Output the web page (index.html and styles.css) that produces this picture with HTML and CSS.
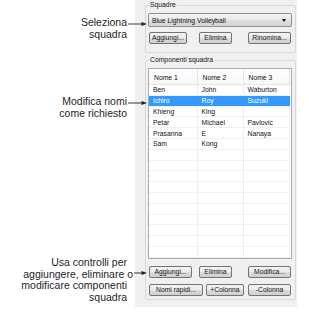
FILE: index.html
```html
<!DOCTYPE html>
<html lang="it">
<head>
    <title>Squadre</title>
    <link rel="stylesheet" href="styles.css">
</head>
<body>

<div class="page">
    <div class="notes">
        <div class="note note-select">
            <p class="note-text">Seleziona<br>squadra</p>
            <svg class="arrow arrow-long" width="19" height="12" viewBox="0 0 19 12">
                <line x1="0" y1="6" x2="15" y2="6" stroke="#222" stroke-width="0.9"/>
                <polygon points="19,6 13.5,4 13.5,8" fill="#222"/>
            </svg>
        </div>
        <div class="note note-edit">
            <p class="note-text">Modifica nomi<br>come richiesto</p>
            <svg class="arrow arrow-long" width="19" height="12" viewBox="0 0 19 12">
                <line x1="0" y1="6" x2="15" y2="6" stroke="#222" stroke-width="0.9"/>
                <polygon points="19,6 13.5,4 13.5,8" fill="#222"/>
            </svg>
        </div>
        <div class="note note-controls">
            <p class="note-text">
                <span class="note-line">Usa controlli per</span>
                <span class="note-line note-line-wide">aggiungere, eliminare o</span>
                <span class="note-line">modificare componenti</span>
                <span class="note-line">squadra</span>
            </p>
            <svg class="arrow arrow-short" width="13" height="12" viewBox="0 0 13 12">
                <line x1="0" y1="6" x2="9" y2="6" stroke="#222" stroke-width="0.9"/>
                <polygon points="13,6 7.5,4 7.5,8" fill="#222"/>
            </svg>
        </div>
    </div>

    <div class="panel">
        <fieldset class="group group-teams">
            <legend>Squadre</legend>
            <div class="combo">
                <span>Blue Lightning Volleyball</span>
                <span class="combo-arrow"></span>
            </div>
            <div class="btn-row btn-row-first">
                <button class="btn w38">Aggiungi...</button>
                <button class="btn w33 ml12">Elimina</button>
                <button class="btn w43 ml16">Rinomina...</button>
            </div>
        </fieldset>

        <fieldset class="group group-members">
            <legend>Componenti squadra</legend>
            <div class="listbox">
                <table class="grid">
                    <thead>
                        <tr><th>Nome 1</th><th>Nome 2</th><th>Nome 3</th><th class="filler"></th></tr>
                    </thead>
                    <tbody>
                        <tr><td>Ben</td><td>John</td><td>Waburton</td><td class="filler"></td></tr>
                        <tr class="selected"><td>Ichiro</td><td>Roy</td><td>Suzuki</td><td class="filler"></td></tr>
                        <tr><td>Khieng</td><td>King</td><td></td><td class="filler"></td></tr>
                        <tr><td>Petar</td><td>Michael</td><td>Pavlovic</td><td class="filler"></td></tr>
                        <tr><td>Prasanna</td><td>E</td><td>Nanaya</td><td class="filler"></td></tr>
                        <tr><td>Sam</td><td>Kong</td><td></td><td class="filler"></td></tr>
                        <tr><td></td><td></td><td></td><td class="filler"></td></tr>
                        <tr><td></td><td></td><td></td><td class="filler"></td></tr>
                        <tr><td></td><td></td><td></td><td class="filler"></td></tr>
                        <tr><td></td><td></td><td></td><td class="filler"></td></tr>
                        <tr><td></td><td></td><td></td><td class="filler"></td></tr>
                        <tr><td></td><td></td><td></td><td class="filler"></td></tr>
                        <tr><td></td><td></td><td></td><td class="filler"></td></tr>
                        <tr><td></td><td></td><td></td><td class="filler"></td></tr>
                        <tr><td></td><td></td><td></td><td class="filler"></td></tr>
                        <tr><td></td><td></td><td></td><td class="filler"></td></tr>
                    </tbody>
                </table>
            </div>
            <div class="btn-row btn-row-list">
                <button class="btn w43">Aggiungi...</button>
                <button class="btn w33 ml7">Elimina</button>
                <button class="btn w43 ml16">Modifica...</button>
            </div>
            <div class="btn-row btn-row-extra">
                <button class="btn w54">Nomi rapidi...</button>
                <button class="btn w38 ml3">+Colonna</button>
                <button class="btn w43 ml4">-Colonna</button>
            </div>
        </fieldset>
    </div>
</div>

</body>
</html>
```

FILE: styles.css
```css
html, body {
  margin: 0;
  padding: 0;
  background: white;
}
.page {
  display: flex;
  width: 309px;
  height: 329px;
}

/* callouts on the left */
.notes {
  width: 135px;
  display: flex;
  flex-direction: column;
  font-family: "Liberation Sans", Arial, sans-serif;
  font-size: 10.5px;
  line-height: 11.7px;
  color: #1e1e1e;
}
.note {
  display: flex;
  align-items: flex-start;
}
.note-select {
  margin-top: 17px;
}
.note-edit {
  margin-top: 55.6px;
}
.note-controls {
  margin-top: 137.6px;
}
.note-text {
  flex: 1;
  margin: 0;
  text-align: right;
}
.note-line {
  display: block;
}
.note-line-wide {
  margin-right: -6px;
}
.arrow {
  position: relative;
  z-index: 1;
  flex: none;
  margin-right: -12px;
}
.arrow-long {
  margin-left: 1px;
  margin-top: 1px;
}
.arrow-short {
  margin-left: 7px;
  margin-top: 10px;
}

/* dialog panel */
.panel {
  width: 162px;
  height: 307px;
  box-sizing: border-box;
  padding: 0 1px 0 10px;
  background: #f0f0f0;
  font-family: "Liberation Sans", Tahoma, sans-serif;
  font-size: 6.8px;
  color: #111;
}
.group {
  margin: 0;
  padding: 0 3px 0 2px;
  min-width: 0;
  border: 1px solid #d5d9dc;
  border-radius: 2px;
}
.group legend {
  padding: 0 1px;
  margin-left: 1px;
  line-height: 10px;
  height: 10px;
}
.group-teams {
  padding-bottom: 8px;
}
.group-members {
  margin-top: 2px;
  padding-bottom: 3px;
}

.combo {
  margin-top: 3px;
  height: 14px;
  box-sizing: border-box;
  border: 1px solid #8e8f8f;
  border-radius: 2px;
  background: linear-gradient(#f4f4f4, #e8e8e8 50%, #dcdcdc 51%, #d6d6d6);
  display: flex;
  align-items: center;
  justify-content: space-between;
  padding: 0 5px 0 3px;
}
.combo-arrow {
  width: 0;
  height: 0;
  border-left: 2.5px solid transparent;
  border-right: 2.5px solid transparent;
  border-top: 3px solid #111;
}

.btn-row {
  display: flex;
  margin-left: 1px;
}
.btn-row-first {
  margin-top: 5px;
}
.btn-row-list {
  margin-top: 6.5px;
}
.btn-row-extra {
  margin-top: 6.5px;
}
.btn {
  height: 12px;
  padding: 0;
  box-sizing: border-box;
  border: 1px solid #747474;
  border-radius: 2px;
  background: linear-gradient(#f3f3f3, #ebebeb 50%, #dddddd 51%, #cfcfcf);
  font-family: "Liberation Sans", Tahoma, sans-serif;
  font-size: 6.8px;
  color: #111;
  line-height: 10px;
  text-align: center;
  white-space: nowrap;
}
.w33 { width: 33px; }
.w38 { width: 38px; }
.w43 { width: 43px; }
.w54 { width: 54px; }
.ml3 { margin-left: 3px; }
.ml4 { margin-left: 4px; }
.ml7 { margin-left: 7px; }
.ml12 { margin-left: 12px; }
.ml16 { margin-left: 16px; }

/* list view */
.listbox {
  margin-top: 3px;
  height: 191px;
  box-sizing: border-box;
  border: 1px solid #a5acb5;
  background: white;
  overflow: hidden;
}
.grid {
  width: 100%;
  border-collapse: collapse;
  table-layout: fixed;
}
.grid th,
.grid td {
  padding: 0 0 0 4px;
  text-align: left;
  font-weight: normal;
  white-space: nowrap;
  overflow: hidden;
}
.grid th {
  height: 15.5px;
  padding-left: 5px;
  padding-top: 2px;
  box-sizing: border-box;
  background: linear-gradient(white, #f7f8f9);
  border-right: 1px solid #e3e5e8;
  border-bottom: 1px solid #e3e5e8;
}
.grid th:nth-child(1) { width: 48px; }
.grid th:nth-child(2) { width: 46px; }
.grid th:nth-child(3) { width: 46px; }
.grid td {
  height: 10.8px;
  box-sizing: border-box;
  border-right: 1px solid #ececec;
  border-bottom: 1px solid #f0f0f0;
  line-height: 9px;
}
.grid .filler {
  border: none;
  padding: 0;
}
.grid tr.selected td {
  background: #3399ff;
  color: white;
  border-right-color: #3399ff;
}
.grid tr.selected td.filler {
  background: white;
}
```
